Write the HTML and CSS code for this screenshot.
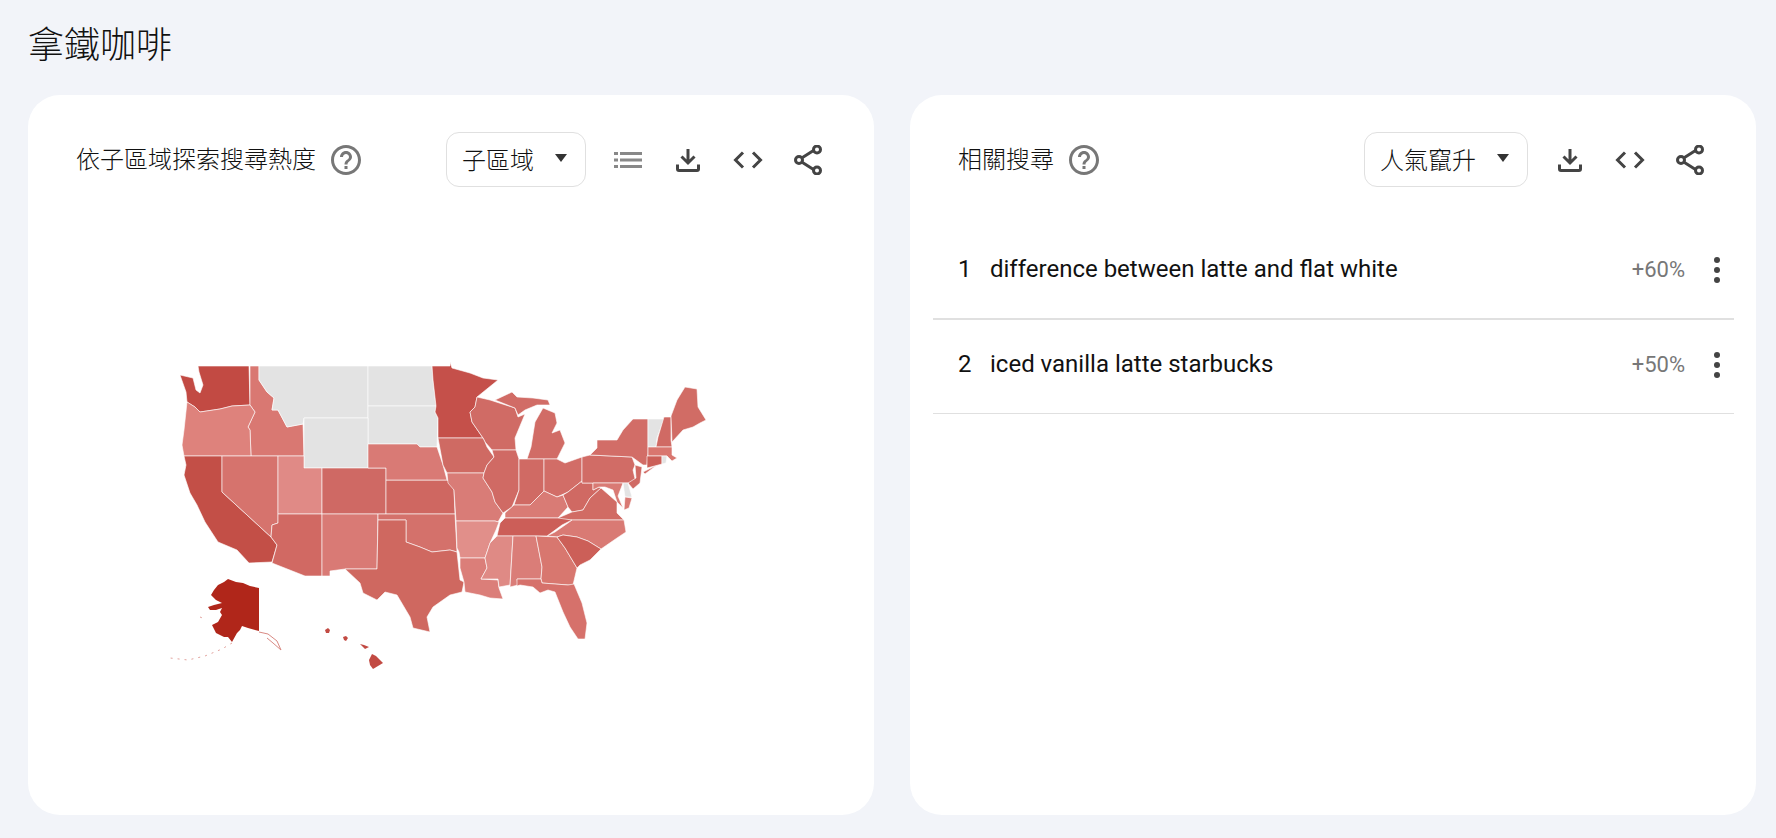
FILE: index.html
```html
<!DOCTYPE html>
<html lang="zh-Hant">
<head>
    <meta charset="UTF-8">
    <title>拿鐵咖啡</title>
    <link rel="stylesheet" href="styles.css">
</head>
<body>

<!-- shared icons -->
<svg class="sprite">
    <symbol id="i-help" viewBox="0 0 24 24"><path d="M11 18h2v-2h-2v2zm1-16C6.48 2 2 6.48 2 12s4.48 10 10 10 10-4.48 10-10S17.52 2 12 2zm0 18c-4.41 0-8-3.59-8-8s3.59-8 8-8 8 3.59 8 8-3.59 8-8 8zm0-14c-2.21 0-4 1.79-4 4h2c0-1.1.9-2 2-2s2 .9 2 2c0 2-3 1.75-3 5h2c0-2.25 3-2.5 3-5 0-2.21-1.79-4-4-4z"/></symbol>
    <symbol id="i-list" viewBox="0 0 28 16"><path d="M0 0h4v3H0zM6 0h22v3H6zM0 6.500h4v3H0zM6 6.500h22v3H6zM0 13h4v3H0zM6 13h22v3H6z"/></symbol>
    <symbol id="i-download" viewBox="0 0 24 24"><path class="line" d="M12 1v13M5.500 8.500l6.500 6.500 6.500-6.500M1.500 16.500v4.500q0 1.500 1.500 1.500h18q1.500 0 1.500-1.500v-4.500"/></symbol>
    <symbol id="i-code" viewBox="0 0 30 18"><path class="line" d="M10 1.500L2.500 9l7.500 7.500M20 1.500L27.500 9 20 16.500"/></symbol>
    <symbol id="i-share" viewBox="0 0 28 30"><path class="line" d="M8.500 12.500l11-7M8.500 17.500l11 7"/><circle class="line" cx="5" cy="15" r="3.500"/><circle class="line" cx="23" cy="4.500" r="3.500"/><circle class="line" cx="23" cy="25.500" r="3.500"/></symbol>
    <symbol id="i-dots" viewBox="0 0 6 26"><circle cx="3" cy="3" r="3"/><circle cx="3" cy="13" r="3"/><circle cx="3" cy="23" r="3"/></symbol>
</svg>

<h1 class="page-title">拿鐵咖啡</h1>

<div class="cards">
    <section class="card">
        <div class="card-head">
            <h2 class="card-title">依子區域探索搜尋熱度</h2>
            <svg class="help"><use href="#i-help"/></svg>
            <div class="dropdown"><span class="dropdown-label">子區域</span><span class="caret"></span></div>
            <span class="tool"><svg class="ic-list"><use href="#i-list"/></svg></span>
            <span class="tool"><svg class="ic-download"><use href="#i-download"/></svg></span>
            <span class="tool"><svg class="ic-code"><use href="#i-code"/></svg></span>
            <span class="tool"><svg class="ic-share"><use href="#i-share"/></svg></span>
        </div>

        <!-- viewBox uses screen coordinates, simpler to trace -->
        <svg class="map" viewBox="160 355 560 320">
            <g class="states">
                <polygon fill="#c24a43" points="198,366 249,366 250,405 232,406 220,409 200,412 195,407 187,402 186,392 180,375 193,378 196,390 200,393 203,385 199,372"/>
                <polygon fill="#d97872" points="250,366 259,366 259,380 267,392 274,398 272,410 278,410 287,427 303,424 304,456 251,456 250,430 248,427 255,412 250,405"/>
                <polygon fill="#e3e3e3" points="259,366 368,366 368,418 304,418 303,424 287,427 278,410 272,410 274,398 267,392 259,380"/>
                <polygon fill="#e3e3e3" points="368,366 432,366 433,380 436,406 368,406"/>
                <polygon fill="#e3e3e3" points="368,406 436,406 435,412 438,418 437,447 420,447 417,444 368,444"/>
                <polygon fill="#e3e3e3" points="304,418 368,418 368,468 304,468"/>
                <polygon fill="#de827c" points="187,402 195,407 200,412 220,409 232,406 250,405 255,412 248,427 250,430 251,456 184,456 182,445 184,430"/>
                <polygon fill="#c34f47" points="184,456 222,456 222,492 271,537 277,545 272,562 249,563 237,550 218,542 205,522 197,505 190,493 184,475 186,465"/>
                <polygon fill="#d6736d" points="222,456 278,456 278,523 272,525 271,537 222,492"/>
                <polygon fill="#e08a86" points="278,456 304,456 304,468 322,468 322,514 278,514"/>
                <polygon fill="#cf6964" points="322,468 386,468 386,514 322,514"/>
                <polygon fill="#d16963" points="278,514 322,514 322,576 305,576 272,563 277,545 271,537 272,525 278,523"/>
                <polygon fill="#d97a75" points="322,514 378,514 377,569 345,569 330,571 330,576 322,576"/>
                <polygon fill="#cf6761" points="386,480 447,480 452,485 454,490 455,514 386,514"/>
                <polygon fill="#d97a75" points="368,444 417,444 420,447 437,447 443,465 447,480 386,480 386,468 368,468"/>
                <polygon fill="#d4716b" points="378,514 455,514 457,552 450,550 432,552 420,547 406,542 406,520 378,520"/>
                <polygon fill="#cf6860" points="378,520 406,520 406,542 420,547 432,552 450,550 457,552 460,580 464,582 462,592 450,595 433,607 427,617 430,632 413,628 410,617 397,595 385,592 377,600 363,593 360,583 345,569 377,569"/>
                <polygon fill="#c5504a" points="432,366 450,366 450,362 452,368 470,373 483,378 498,380 477,397 475,407 470,412 472,422 483,438 438,438 438,418 435,412 436,406 433,380"/>
                <polygon fill="#d06b65" points="477,397 490,400 515,408 518,417 525,414 515,438 516,450 492,450 485,442 483,438 472,422 470,412 475,407"/>
                <polygon fill="#d16c66" points="495,400 512,392 517,397 533,398 548,400 550,405 537,405 525,410 518,415 515,408"/>
                <polygon fill="#d16c66" points="543,408 555,413 557,423 552,433 560,430 565,443 557,459 527,459 531,447 535,422"/>
                <polygon fill="#cf6a63" points="438,438 483,438 485,442 487,447 494,457 487,465 484,473 447,473 443,465"/>
                <polygon fill="#d97c77" points="447,473 484,473 483,478 492,492 495,502 503,513 498,522 495,521 456,521 454,490 448,483"/>
                <polygon fill="#d06a64" points="492,450 516,450 519,459 519,490 512,507 503,513 495,502 492,492 483,478 484,473 487,465 494,457"/>
                <polygon fill="#d06a64" points="519,459 544,459 544,491 530,505 514,505 519,490"/>
                <polygon fill="#d26d67" points="544,459 557,459 565,463 582,457 582,481 568,492 557,497 544,491"/>
                <polygon fill="#d97b75" points="514,505 530,505 544,491 557,497 563,495 568,507 558,518 513,518 505,518 505,513"/>
                <polygon fill="#d06963" points="563,495 568,492 582,481 582,483 593,483 593,490 599,487 601,488 590,498 583,510 572,512 568,507"/>
                <polygon fill="#d16b64" points="558,518 572,512 583,510 590,498 601,488 617,502 617,513 624,520 558,520"/>
                <polygon fill="#d16c66" points="582,457 590,455 632,457 635,465 633,470 636,483 582,483"/>
                <polygon fill="#d26d67" points="590,455 597,448 597,440 617,440 623,430 633,419 648,419 648,453 647,465 643,465 632,457"/>
                <polygon fill="#d26d67" points="643,472 657,465 645,474"/>
                <polygon fill="#d06a64" points="635,465 642,467 641,475 640,483 633,489 628,483 636,478"/>
                <polygon fill="#e3e3e3" points="648,419 664,419 657,438 656,447 648,447"/>
                <polygon fill="#d06a64" points="664,417 671,417 671,440 672,447 656,447 658,437"/>
                <polygon fill="#d16c65" points="671,416 677,400 685,387 697,389 698,407 706,420 700,423 693,427 683,430 672,442"/>
                <polygon fill="#d9766f" points="648,447 672,447 672,455 677,458 672,461 667,456 648,456"/>
                <polygon fill="#cc5f58" points="647,456 662,456 662,464 647,468"/>
                <polygon fill="#e3e3e3" points="662,456 667,456 666,463 662,464"/>
                <polygon fill="#d97a74" points="593,483 623,483 618,496 623,508 617,502 613,490 605,487 599,487 593,490"/>
                <polygon fill="#e3e3e3" points="623,483 628,483 632,497 625,497"/>
                <polygon fill="#d97a74" points="625,497 632,498 629,508 624,510"/>
                <polygon fill="#d97a74" points="572,520 624,520 626,532 617,538 601,549 588,541 577,537 563,535 557,537 547,536 555,532 568,523"/>
                <polygon fill="#cc5e58" points="513,518 558,518 572,520 562,525 547,536 497,536 500,523 505,518"/>
                <polygon fill="#e18f8a" points="456,521 495,521 499,522 496,530 490,543 485,558 460,558 459,552 457,548"/>
                <polygon fill="#db7e79" points="460,558 485,558 487,568 481,579 498,580 499,588 503,599 490,598 480,595 465,592 464,582 460,568"/>
                <polygon fill="#df8a85" points="497,536 513,536 510,585 499,587 498,579 481,579 487,568 485,558 490,543"/>
                <polygon fill="#da7d78" points="513,536 536,536 542,567 541,579 517,579 518,585 510,587"/>
                <polygon fill="#d8776f" points="536,536 557,537 565,548 577,568 573,585 568,585 542,583 541,579 542,567"/>
                <polygon fill="#cc5f58" points="557,537 563,535 577,537 588,541 601,549 590,560 580,565 577,568 565,548"/>
                <polygon fill="#d6716b" points="517,579 541,579 542,583 568,585 574,584 582,603 587,623 585,639 578,639 570,627 563,612 555,592 548,590 540,593 533,587 520,585 517,586"/>
            </g>
            <!-- alaska -->
            <polygon fill="#b0261a" points="259,588 259,631 248,628 242,626 240,630 237,633 232,642 228,637 224,637 220,635 216,633 212,625 218,622 222,615 220,612 222,608 216,610 210,610 208,607 214,605 222,603 216,600 211,595 214,590 218,585 224,582 228,579 236,582 243,583 250,586"/>
            <polyline class="coast" points="259,632 268,634 277,641 281,650 273,643 267,638"/>
            <polyline class="chain" points="232,643 222,649 205,656 188,660 170,658"/>
            <polyline class="chain" points="200,617 205,619"/>
            <!-- hawaii -->
            <g fill="#c24a43">
                <polygon points="372,654 376,656 383,663 378,666 373,669 370,665 369,660"/>
                <polygon points="360,644 364,645 369,647 365,649 363,647"/>
                <polygon points="343,637 346,636 348,638 346,641 344,640"/>
                <polygon points="325,630 328,628 330,630 329,633 326,633"/>
            </g>
        </svg>
    </section>

    <section class="card">
        <div class="card-head">
            <h2 class="card-title">相關搜尋</h2>
            <svg class="help"><use href="#i-help"/></svg>
            <div class="dropdown"><span class="dropdown-label">人氣竄升</span><span class="caret"></span></div>
            <span class="tool"><svg class="ic-download"><use href="#i-download"/></svg></span>
            <span class="tool"><svg class="ic-code"><use href="#i-code"/></svg></span>
            <span class="tool"><svg class="ic-share"><use href="#i-share"/></svg></span>
        </div>

        <div class="rows">
            <div class="row row-first">
                <span class="row-num">1</span>
                <span class="row-text">difference between latte and flat white</span>
                <span class="row-pct">+60%</span>
                <svg class="row-dots"><use href="#i-dots"/></svg>
            </div>
            <div class="row">
                <span class="row-num">2</span>
                <span class="row-text">iced vanilla latte starbucks</span>
                <span class="row-pct">+50%</span>
                <svg class="row-dots"><use href="#i-dots"/></svg>
            </div>
        </div>
    </section>
</div>

</body>
</html>
```

FILE: styles.css
```css
body {
    margin: 0;
    padding: 0 20px 0 28px;
    background-color: #f2f4f9;
    color: #111;
    font-family: "Noto Sans CJK TC", "Liberation Sans", sans-serif;
}

.sprite {
    display: none;
}

.page-title {
    margin: 0;
    height: 95px;
    padding: 17px 0 0 0;
    box-sizing: border-box;
    font-size: 36px;
    line-height: 50px;
    font-weight: 300;
}

.cards {
    display: flex;
    gap: 36px;
}

.card {
    width: 846px;
    height: 720px;
    background-color: #fff;
    border-radius: 32px;
}

/* Card header */
.card-head {
    display: flex;
    align-items: center;
    padding: 37px 36px 0 48px;
    height: 55px;
}

.card-title {
    margin: 0 0 4px;
    font-size: 24px;
    font-weight: 300;
    line-height: 50px;
}

.help {
    width: 36px;
    height: 36px;
    margin-left: 12px;
    fill: #777;
}

.dropdown {
    display: flex;
    align-items: center;
    gap: 21px;
    height: 55px;
    box-sizing: border-box;
    margin-left: auto;
    padding: 0 18px 0 15px;
    border: 1px solid #e0e0e0;
    border-radius: 13px;
    font-size: 24px;
}

.dropdown-label {
    margin-bottom: 3px;
    font-weight: 300;
}

.caret {
    width: 0;
    height: 0;
    margin-top: -3px;
    border-left: 6px solid transparent;
    border-right: 6px solid transparent;
    border-top: 8px solid #333;
}

.tool {
    display: flex;
    align-items: center;
    justify-content: center;
    width: 60px;
    height: 55px;
}

.tool:first-of-type {
    margin-left: 12px;
}

.tool svg {
    fill: #444;
}

.line {
    fill: none;
    stroke: #444;
    stroke-width: 3;
}

.ic-list {
    width: 28px;
    height: 16px;
    fill: #888 !important;
}

.ic-download {
    width: 24px;
    height: 24px;
}

.ic-code {
    width: 30px;
    height: 18px;
}

.ic-share {
    width: 28px;
    height: 30px;
}

/* Map */
.map {
    display: block;
    width: 560px;
    height: 320px;
    margin: 168px 0 0 132px;
}

.states polygon {
    stroke: #fff;
    stroke-opacity: 0.6;
    stroke-width: 1;
    stroke-linejoin: round;
}

.coast {
    fill: none;
    stroke: #d98a84;
    stroke-width: 1;
}

.chain {
    fill: none;
    stroke: #e2a29d;
    stroke-width: 1;
    stroke-dasharray: 2 5;
}

/* Related searches */
.rows {
    margin: 38px 22px 0 23px;
}

.row {
    display: flex;
    align-items: center;
    height: 94px;
    box-sizing: border-box;
    padding-bottom: 4px;
    border-bottom: 1px solid #e0e0e0;
}

.row-first {
    height: 95px;
    border-bottom-width: 2px;
}

.row-num {
    width: 32px;
    margin: 0 0 2px 25px;
    font-family: "Roboto", sans-serif;
    font-size: 24px;
}

.row-text {
    margin-bottom: 2px;
    font-family: "Roboto", sans-serif;
    font-size: 24px;
}

.row-pct {
    margin-left: auto;
    font-family: "Roboto", sans-serif;
    font-size: 22px;
    color: #777;
}

.row-dots {
    width: 6px;
    height: 26px;
    margin: 0 14px 0 29px;
    fill: #444;
}
```
